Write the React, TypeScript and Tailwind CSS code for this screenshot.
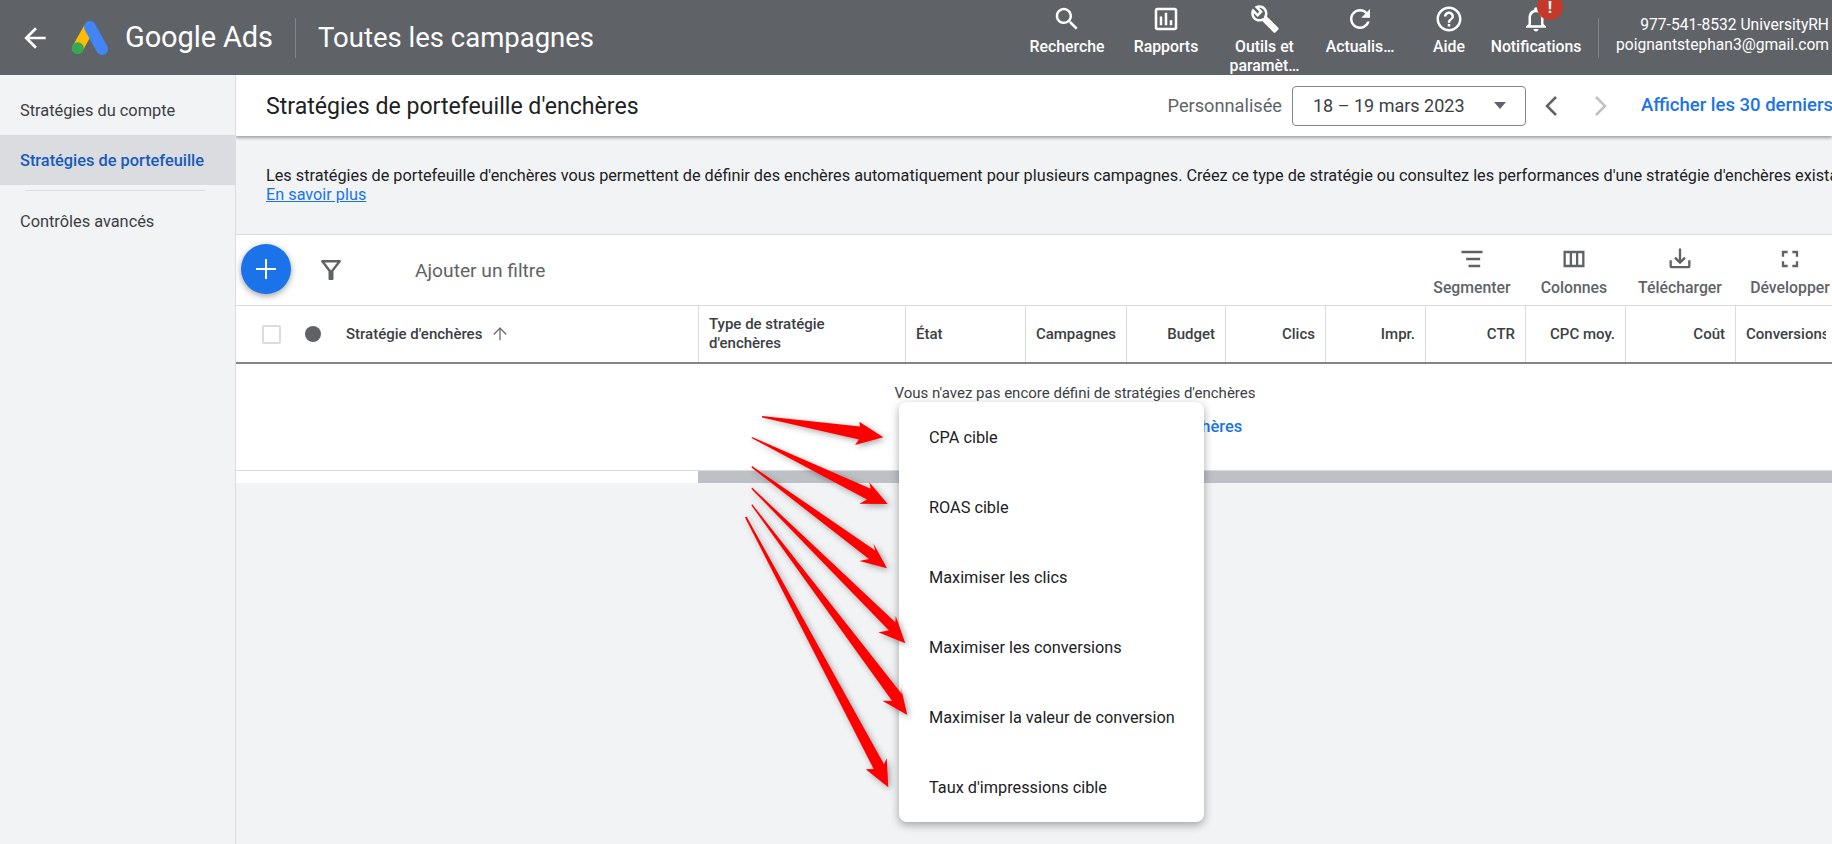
import { ReactNode } from 'react';
import { ArrowUp } from 'lucide-react';

const ICONS = {
  back: 'M20 11H7.83l5.59-5.59L12 4l-8 8 8 8 1.41-1.41L7.83 13H20v-2z',
  search:
    'M15.5 14h-.79l-.28-.27C15.41 12.59 16 11.11 16 9.5 16 5.91 13.09 3 9.5 3S3 5.91 3 9.5 5.91 16 9.5 16c1.61 0 3.09-.59 4.23-1.57l.27.28v.79l5 4.99L20.49 19l-4.99-5zm-6 0C7.01 14 5 11.99 5 9.5S7.01 5 9.5 5 14 7.01 14 9.5 11.99 14 9.5 14z',
  reports:
    'M19 3H5c-1.1 0-2 .9-2 2v14c0 1.1.9 2 2 2h14c1.1 0 2-.9 2-2V5c0-1.1-.9-2-2-2zm0 16H5V5h14v14zM7 10h2v7H7zm4-3h2v10h-2zm4 6h2v4h-2z',
  // outlined head, the handle is filled in like the reference
  tools:
    'M22.61 18.99l-9.08-9.08c.93-2.34.45-5.1-1.44-7C9.79.61 6.21.4 3.66 2.26L7.5 6.11 6.08 7.52 2.25 3.69C.39 6.23.6 9.82 2.9 12.11c1.86 1.86 4.57 2.35 6.89 1.48l9.11 9.11c.39.39 1.02.39 1.41 0l2.3-2.3c.4-.38.4-1.02 0-1.41zm-3 1.6l-9.46-9.46c-.61.45-1.29.72-2 .82-1.36.2-2.79-.21-3.83-1.25C3.37 9.76 2.93 8.5 3 7.26l3.09 3.09 4.24-4.24-3.09-3.09c1.24-.07 2.49.37 3.44 1.31 1.08 1.08 1.49 2.57 1.24 3.96-.12.71-.42 1.37-.88 1.96l9.45 9.45-.88.88z',
  toolsHandle: 'M10 12l2-2 10 10-2 2z',
  refresh:
    'M17.65 6.35C16.2 4.9 14.21 4 12 4c-4.42 0-7.99 3.58-7.99 8s3.57 8 7.99 8c3.73 0 6.84-2.55 7.73-6h-2.08c-.82 2.33-3.04 4-5.65 4-3.31 0-6-2.69-6-6s2.69-6 6-6c1.66 0 3.14.69 4.22 1.78L13 11h7V4l-2.35 2.35z',
  help: 'M11 18h2v-2h-2v2zm1-16C6.48 2 2 6.48 2 12s4.48 10 10 10 10-4.48 10-10S17.52 2 12 2zm0 18c-4.41 0-8-3.59-8-8s3.59-8 8-8 8 3.59 8 8-3.59 8-8 8zm0-14c-2.21 0-4 1.79-4 4h2c0-1.1.9-2 2-2s2 .9 2 2c0 2-3 1.75-3 5h2c0-2.25 3-2.5 3-5 0-2.21-1.79-4-4-4z',
  bell: 'M12 22c1.1 0 2-.9 2-2h-4c0 1.1.9 2 2 2zm6-6v-5c0-3.07-1.63-5.64-4.5-6.32V4c0-.83-.67-1.5-1.5-1.5s-1.5.67-1.5 1.5v.68C7.64 5.36 6 7.92 6 11v5l-2 2v1h16v-1l-2-2zm-2 1H8v-6c0-2.48 1.51-4.5 4-4.5s4 2.02 4 4.5v6z',
  filter:
    'M7 6h10l-5.01 6.3L7 6zm-2.75-.39C6.27 8.2 10 13 10 13v6c0 .55.45 1 1 1h2c.55 0 1-.45 1-1v-6s3.73-4.8 5.75-7.39C20.26 4.95 19.79 4 18.95 4H5.04c-.83 0-1.3.95-.79 1.61z',
  columns: 'M3 5v14h18V5H3zm5.33 12H5V7h3.33v10zm5.34 0h-3.34V7h3.34v10zM19 17h-3.33V7H19v10z',
  segment: 'M3 5h18v2H3zM7 11h12v2H7zM9 17h10v2H9z',
  download:
    'M19 13v5H5v-5H3v5c0 1.1.9 2 2 2h14c1.1 0 2-.9 2-2v-5h-2zm-6-.33l2.59-2.58L17 11.5l-5 5-5-5 1.41-1.41L11 12.67V3h2z',
  expand: 'M7 14H5v5h5v-2H7v-3zm-2-4h2V7h3V5H5v5zm12 7h-3v2h5v-5h-2v3zM14 5v2h3v3h2V5h-5z',
};

function Icon({ d, className }: { d: string; className: string }) {
  return (
    <svg viewBox="0 0 24 24" fill="currentColor" className={className}>
      <path d={d} />
    </svg>
  );
}

function NavItem({ icon, width, children, badge }: { icon: ReactNode; width: string; children: ReactNode; badge?: boolean }) {
  return (
    <div className={`${width} relative flex h-full shrink-0 flex-col items-center pt-[4px]`}>
      {icon}
      {badge && (
        <span className="absolute left-[45px] top-[-6px] flex size-[26px] items-center justify-center rounded-full bg-[#c5392b] pt-[2px] text-[16px] font-bold text-white">
          !
        </span>
      )}
      <span className="mt-[3px] text-center text-[15.8px] font-medium leading-[19px] text-white">{children}</span>
    </div>
  );
}

function NavIcon({ d }: { d: string }) {
  return <Icon d={d} className="size-[30px] text-white" />;
}

function ToolItem({ d, label, width }: { d: string; label: string; width: string }) {
  return (
    <div className={`${width} flex shrink-0 flex-col items-center pt-[2px]`}>
      <Icon d={d} className="size-[28px] text-[#5f6368]" />
      <span className="mt-[5px] text-[15.8px] font-medium leading-[19px] text-[#5f6368]">{label}</span>
    </div>
  );
}

function HeadCell({ label, width }: { label: string; width: string }) {
  return (
    <div className={`${width} flex h-full shrink-0 items-center justify-end border-l border-[#dadce0] pr-[10px]`}>
      {label}
    </div>
  );
}

const MENU = [
  'CPA cible',
  'ROAS cible',
  'Maximiser les clics',
  'Maximiser les conversions',
  'Maximiser la valeur de conversion',
  "Taux d'impressions cible",
];

// page pixels: tail (two points), lower shaft end, barb, tip, barb, upper shaft end
const ARROWS = [
  '762,416 762,417.5 859,439.5 855,445 883.3,437.3 859.3,421.7 860,426.5',
  '752,437 751.5,438 867,499.6 859.3,503.7 887.7,504 869.3,482.3 870.7,488.7',
  '752,466 751.5,467.5 869,559 859.3,561 887,568.3 873.3,543.3 875.2,550.5',
  '752,487.5 751.5,489 889,630.4 878.3,632.3 905.3,643.3 895.7,616 895.3,622.2',
  '752,504 751.5,505.5 892.2,701 882.3,700.7 907.3,715 900.7,686.7 901.8,694',
  '746.5,516.5 745,517.5 873.7,769 865.7,769.3 888.3,787.3 886.7,758.3 884,764.3',
];

export default function App() {
  return (
    <div className="relative flex h-[844px] w-[1832px] flex-col overflow-hidden bg-[#f1f3f4] font-['Roboto',sans-serif] text-[#3c4043]">
      <header className="flex h-[75px] shrink-0 items-center overflow-hidden bg-[#5f6368] text-white">
        <Icon d={ICONS.back} className="ml-[19px] size-[32px] shrink-0" />
        <svg viewBox="0 0 38 34" className="ml-[20px] h-[34px] w-[38px] shrink-0">
          <line x1="17.5" y1="8" x2="6.7" y2="27.3" stroke="#fbbc04" strokeWidth="11" strokeLinecap="round" />
          <line x1="19" y1="6" x2="31" y2="28" stroke="#4285f4" strokeWidth="12" strokeLinecap="round" />
          <circle cx="6.7" cy="27.3" r="6" fill="#34a853" />
        </svg>
        <span className="ml-[16px] text-[29px] leading-none tracking-[-0.1px]">Google Ads</span>
        <div className="ml-[22px] h-[40px] w-px bg-[#80868b]" />
        <span className="ml-[22px] text-[27.5px] leading-none">Toutes les campagnes</span>
        <div className="flex-1" />
        <NavItem icon={<NavIcon d={ICONS.search} />} width="w-[100px]">Recherche</NavItem>
        <NavItem icon={<NavIcon d={ICONS.reports} />} width="w-[98px]">Rapports</NavItem>
        <NavItem
          icon={
            <svg viewBox="0 0 24 24" fill="currentColor" className="size-[30px] text-white">
              <path d={ICONS.tools} />
              <path d={ICONS.toolsHandle} />
            </svg>
          }
          width="w-[99px]"
        >
          Outils et<br />paramèt…
        </NavItem>
        <NavItem icon={<NavIcon d={ICONS.refresh} />} width="w-[92px]">Actualis…</NavItem>
        <NavItem icon={<NavIcon d={ICONS.help} />} width="w-[86px]">Aide</NavItem>
        <NavItem icon={<NavIcon d={ICONS.bell} />} width="w-[88px]" badge>Notifications</NavItem>
        <div className="ml-[18px] h-[40px] w-px shrink-0 bg-[#80868b]" />
        <div className="w-[233px] shrink-0 pb-[6px] pr-[3px] text-right text-[15.6px] leading-[20px]">
          <div>977-541-8532 UniversityRH</div>
          <div>poignantstephan3@gmail.com</div>
        </div>
      </header>

      <div className="flex min-h-0 flex-1">
        <aside className="flex w-[236px] shrink-0 flex-col border-r border-[#dadce0] text-[16.35px]">
          <div className="flex h-[60px] items-center pl-[20px] pt-[12px]">Stratégies du compte</div>
          <div className="flex h-[50px] items-center bg-[#dadce0] pl-[20px] pt-[3px] font-medium text-[#185abc]">
            Stratégies de portefeuille
          </div>
          <div className="ml-[25px] mt-[5px] h-px w-[180px] bg-[#dadce0]" />
          <div className="flex h-[60px] items-center pl-[20px] pt-[3px]">Contrôles avancés</div>
        </aside>

        <main className="min-w-0 flex-1 overflow-hidden">
          <div className="flex h-[61px] items-center bg-white pl-[30px] shadow-[0_2px_3px_rgba(60,64,67,0.45)]">
            <h1 className="pt-[3px] text-[23.1px] font-normal text-[#202124]">Stratégies de portefeuille d'enchères</h1>
            <div className="flex-1" />
            <span className="pt-[1px] text-[18.2px] text-[#5f6368]">Personnalisée</span>
            <div className="ml-[10px] flex h-[40px] w-[234px] items-center justify-between rounded-[4px] border border-[#80868b] pl-[20px] pr-[19px] text-[18px]">
              18 – 19 mars 2023
              <span className="h-0 w-0 border-x-[6px] border-t-[7px] border-x-transparent border-t-[#5f6368]" />
            </div>
            <svg viewBox="0 0 16 24" className="ml-[17px] h-[24px] w-[16px] shrink-0 fill-none stroke-[#5f6368] stroke-[2.5]">
              <path d="M13 3 4 12l9 9" />
            </svg>
            <svg viewBox="0 0 16 24" className="ml-[34px] h-[24px] w-[16px] shrink-0 fill-none stroke-[#bdc1c6] stroke-[2.5]">
              <path d="M3 3l9 9-9 9" />
            </svg>
            <span className="ml-[32px] w-[191px] shrink-0 overflow-hidden whitespace-nowrap pt-[1px] text-[18.5px] font-medium text-[#1a73e8]">
              Afficher les 30 derniers
            </span>
          </div>

          <div className="h-[98px] overflow-hidden whitespace-nowrap pl-[30px] pt-[30px] text-[16.25px] leading-[19px] text-[#202124]">
            <div>
              Les stratégies de portefeuille d'enchères vous permettent de définir des enchères automatiquement pour
              plusieurs campagnes. Créez ce type de stratégie ou consultez les performances d'une stratégie d'enchères
              existante.
            </div>
            <a className="text-[#1a73e8] underline">En savoir plus</a>
          </div>

          <section className="border-t border-[#dadce0] bg-white">
            <div className="flex h-[71px] items-center overflow-hidden border-b border-[#dadce0]">
              <div className="ml-[5px] mt-[-2px] flex size-[50px] shrink-0 items-center justify-center rounded-full bg-[#1a73e8] shadow-[0_2px_6px_rgba(60,64,67,0.5)]">
                <svg viewBox="0 0 24 24" className="size-[24px] stroke-white stroke-2">
                  <path d="M12 2v20M2 12h20" />
                </svg>
              </div>
              <Icon d={ICONS.filter} className="ml-[25px] size-[30px] shrink-0 text-[#5f6368]" />
              <span className="ml-[69px] pt-[2px] text-[19.2px] text-[#5f6368]">Ajouter un filtre</span>
              <div className="flex-1" />
              <ToolItem d={ICONS.segment} label="Segmenter" width="w-[100px]" />
              <ToolItem d={ICONS.columns} label="Colonnes" width="w-[104px]" />
              <ToolItem d={ICONS.download} label="Télécharger" width="w-[108px]" />
              <ToolItem d={ICONS.expand} label="Développer" width="w-[112px] mr-[-14px]" />
            </div>

            <div className="flex h-[58px] items-center overflow-hidden border-b-2 border-[#80868b] text-[15px] font-medium leading-[19px]">
              <div className="flex w-[462px] shrink-0 items-center pl-[26px]">
                <span className="size-[19px] rounded-[2px] border-2 border-[#dadce0]" />
                <span className="ml-[24px] size-[16px] rounded-full bg-[#5f6368]" />
                <span className="ml-[25px]">Stratégie d'enchères</span>
                <ArrowUp className="ml-[8px] size-[20px] text-[#5f6368]" strokeWidth={1.5} />
              </div>
              <div className="flex h-full w-[207px] shrink-0 items-center border-l border-[#dadce0] pl-[10px]">
                Type de stratégie<br />d'enchères
              </div>
              <div className="flex h-full w-[120px] shrink-0 items-center border-l border-[#dadce0] pl-[10px]">État</div>
              <HeadCell label="Campagnes" width="w-[101px]" />
              <HeadCell label="Budget" width="w-[99px]" />
              <HeadCell label="Clics" width="w-[100px]" />
              <HeadCell label="Impr." width="w-[100px]" />
              <HeadCell label="CTR" width="w-[100px]" />
              <HeadCell label="CPC moy." width="w-[100px]" />
              <HeadCell label="Coût" width="w-[110px]" />
              <div className="flex h-full min-w-0 flex-1 items-center border-l border-[#dadce0] pl-[10px]">
                <span className="w-[80px] overflow-hidden whitespace-nowrap">Conversions</span>
              </div>
            </div>

            <div className="flex h-[107px] flex-col items-center border-b border-[#dadce0] pl-[82px] pt-[20px]">
              <div className="text-[15px] leading-[19px]">Vous n'avez pas encore défini de stratégies d'enchères</div>
              <div className="mt-[14px] text-[16.5px] font-medium leading-[19px] text-[#1a73e8]">
                Créer une stratégie de portefeuille d'enchères
              </div>
            </div>
            <div className="h-[12px] pl-[462px]">
              <div className="h-full bg-[#bdc1c6]" />
            </div>
          </section>
        </main>
      </div>

      <div className="absolute left-[899px] top-[402px] flex h-[420px] w-[305px] flex-col rounded-[8px] bg-white shadow-[0_3px_8px_rgba(60,64,67,0.45)]">
        {MENU.map(item => (
          <div key={item} className="flex h-[70px] items-center pl-[30px] pt-[3px] text-[16.3px] text-[#202124]">
            {item}
          </div>
        ))}
      </div>

      <svg
        viewBox="720 390 520 454"
        className="absolute left-[720px] top-[390px] h-[454px] w-[520px] fill-[#ff0000] drop-shadow-[2px_2px_3px_rgba(0,0,0,0.35)]"
      >
        {ARROWS.map(points => (
          <polygon key={points} points={points} />
        ))}
      </svg>
    </div>
  );
}
